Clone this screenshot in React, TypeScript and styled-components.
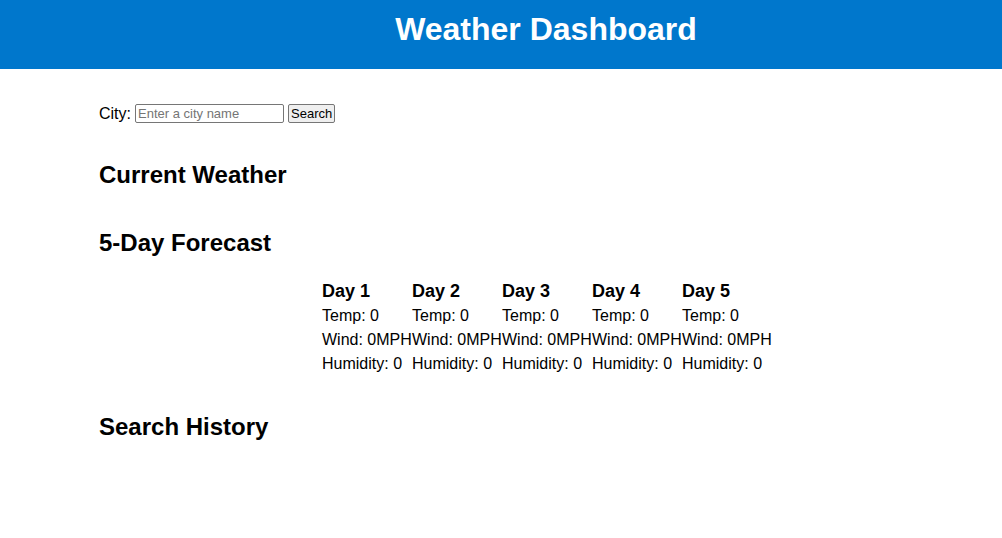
import React from "react";
import styled, { createGlobalStyle } from "styled-components";

const Global = createGlobalStyle`
  html, body { margin: 0; padding: 0; background: #fff; }
  body { font-family: "Liberation Sans", Arial, sans-serif; color: #000; }
`;

const Header = styled.header`
  background: #0077cc;
  height: 69px;
  box-sizing: border-box;
  display: flex;
  align-items: center;
  justify-content: center;
  padding: 0 0 11px 90px;
`;

const Title = styled.h1`
  margin: 0;
  color: #fff;
  font-size: 32px;
  font-weight: bold;
`;

const Main = styled.main`
  margin-left: 90px;
  padding: 0 9px;
`;

const Form = styled.form`
  display: flex;
  align-items: center;
  gap: 4px;
  margin-top: 35px;
  font-size: 16px;
`;

const Input = styled.input`
  font-family: "Liberation Sans", Arial, sans-serif;
  font-size: 13px;
  width: 143px;
  height: 15px;
  padding: 1px 2px;
  border: 1px solid #767676;
  border-radius: 2px;
`;

const Button = styled.button`
  font-family: "Liberation Sans", Arial, sans-serif;
  font-size: 13px;
  padding: 1px 2px;
  border: 1px solid #767676;
  border-radius: 2px;
  background: #efefef;
`;

const SectionTitle = styled.h2<{ $gap: number }>`
  font-size: 24px;
  font-weight: bold;
  margin: ${(p) => p.$gap}px 0 0;
`;

const Forecast = styled.div`
  display: flex;
  justify-content: center;
  padding-left: 2px;
  margin-top: 21px;
`;

const Day = styled.div`
  width: 90px;
  white-space: nowrap;
  font-size: 16px;
  line-height: 24px;
`;

const DayTitle = styled.h3`
  margin: 0;
  font-size: 18px;
  line-height: 26px;
  font-weight: bold;
`;

const Line = styled.div``;

export default function App() {
  return (
    <>
      <Global />
      <Header>
        <Title>Weather Dashboard</Title>
      </Header>
      <Main>
        <Form onSubmit={(e) => e.preventDefault()}>
          <span>City:</span>
          <Input placeholder="Enter a city name" />
          <Button>Search</Button>
        </Form>
        <SectionTitle $gap={38}>Current Weather</SectionTitle>
        <SectionTitle $gap={40}>5-Day Forecast</SectionTitle>
        <Forecast>
          {[1, 2, 3, 4, 5].map((d) => (
            <Day key={d}>
              <DayTitle>Day {d}</DayTitle>
              <Line>Temp: 0</Line>
              <Line>Wind: 0MPH</Line>
              <Line>Humidity: 0</Line>
            </Day>
          ))}
        </Forecast>
        <SectionTitle $gap={37}>Search History</SectionTitle>
      </Main>
    </>
  );
}
